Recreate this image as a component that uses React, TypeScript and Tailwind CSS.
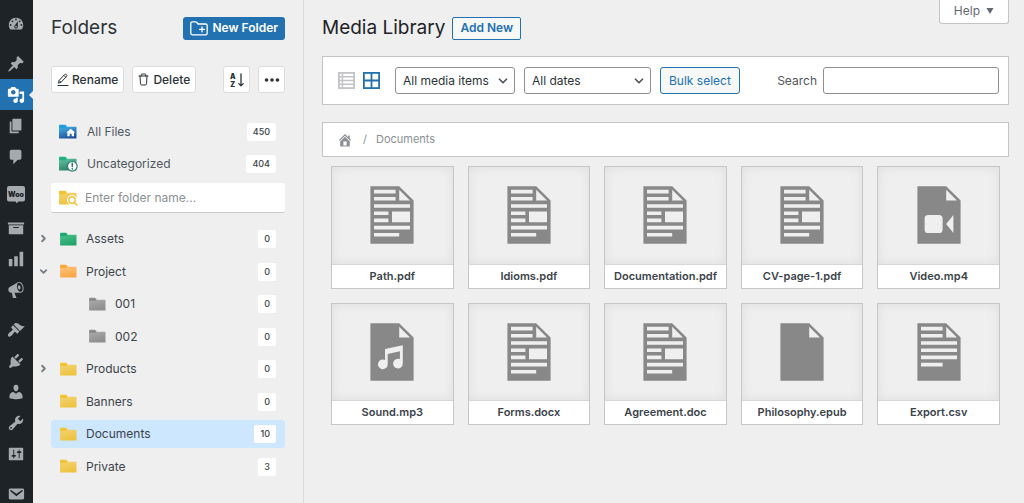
import { useId, type ReactNode } from "react";
import { ChevronDown, ChevronRight } from "lucide-react";

/* ---------- Admin menu ---------- */

const glyphs = {
  dashboard:
    "M3.76 16h12.48c1.1-1.37 1.76-3.11 1.76-5 0-4.42-3.58-8-8-8s-8 3.58-8 8c0 1.89.66 3.63 1.76 5zM10 4c.55 0 1 .45 1 1s-.45 1-1 1-1-.45-1-1 .45-1 1-1zM6 6c.55 0 1 .45 1 1s-.45 1-1 1-1-.45-1-1 .45-1 1-1zm8 0c.55 0 1 .45 1 1s-.45 1-1 1-1-.45-1-1 .45-1 1-1zm-5.37 5.55L12 7v6c0 1.1-.9 2-2 2s-2-.9-2-2c0-.57.24-1.08.63-1.45zM4 10c.55 0 1 .45 1 1s-.45 1-1 1-1-.45-1-1 .45-1 1-1zm12 0c.55 0 1 .45 1 1s-.45 1-1 1-1-.45-1-1 .45-1 1-1zm-5 3c0-.55-.45-1-1-1s-1 .45-1 1 .45 1 1 1 1-.45 1-1z",
  post: "M10.44 3.02l1.82-1.82 6.36 6.35-1.83 1.82c-1.05-.68-2.48-.57-3.41.36l-.75.75c-.92.93-1.04 2.35-.35 3.41l-1.83 1.82-2.41-2.41-2.8 2.79c-.42.42-3.38 2.71-3.8 2.29s1.86-3.39 2.28-3.81l2.79-2.79L4.1 9.36l1.83-1.82c1.05.69 2.48.57 3.4-.36l.75-.75c.93-.92 1.05-2.35.36-3.41z",
  media:
    "M13 11V4c0-.55-.45-1-1-1h-1.67L9 1H5L3.67 3H2c-.55 0-1 .45-1 1v7c0 .55.45 1 1 1h10c.55 0 1-.45 1-1zM7 4.5c1.38 0 2.5 1.12 2.5 2.5S8.38 9.5 7 9.5 4.5 8.38 4.5 7 5.62 4.5 7 4.5zM14 6h5v10.5c0 1.38-1.12 2.5-2.5 2.5S14 17.88 14 16.5s1.12-2.5 2.5-2.5c.17 0 .34.02.5.05V9h-3V6zm-4 8.05V13h2v3.5c0 1.38-1.12 2.5-2.5 2.5S7 17.88 7 16.5 8.12 14 9.5 14c.17 0 .34.02.5.05z",
  page: "M6 15V2h10v13H6zm-1 1h8v2H3V5h2v11z",
  comments:
    "M5 2h9c1.1 0 2 .9 2 2v7c0 1.1-.9 2-2 2h-2l-5 5v-5H5c-1.1 0-2-.9-2-2V4c0-1.1.9-2 2-2z",
  archive: "M19 4v2H1V4h18zM2 7h16v10H2V7zm11 3V9H7v1h6z",
  chart: "M18 18V2h-4v16h4zm-6 0V7H8v11h4zm-6 0v-8H2v8h4z",
  megaphone:
    "M18.15 5.94c.46 1.62.38 3.22-.02 4.48-.42 1.28-1.26 2.18-2.3 2.48-.16.06-.26.06-.4.06-.06.02-.12.02-.18.02-.06.02-.14.02-.22.02h-6.8l2.22 5.5c.02.14-.06.26-.14.34-.08.1-.24.16-.34.16H6.95c-.1 0-.26-.06-.34-.16-.08-.08-.16-.2-.14-.34l-1-5.5H4.25l-.02-.02c-.5.06-1.08-.18-1.54-.62s-.88-1.08-1.06-1.88c-.24-.8-.2-1.56-.02-2.2.18-.62.58-1.08 1.06-1.3l.02-.02 9-5.4c.1-.06.18-.1.24-.16.06-.04.14-.08.24-.12.16-.08.28-.12.5-.18 1.04-.3 2.24.1 3.22.98s1.84 2.24 2.26 3.86zm-2.58 5.98h-.02c.4-.1.74-.34 1.04-.7.58-.7.86-1.76.86-3.04 0-.64-.1-1.3-.28-1.98-.34-1.36-1.02-2.5-1.78-3.24s-1.68-1.1-2.46-.88c-.82.22-1.4.96-1.7 2-.32 1.04-.28 2.36.06 3.72.38 1.36 1 2.5 1.8 3.24.78.74 1.62 1.1 2.48.88zm-2.54-7.08c.22-.04.42-.02.62.04.38.16.76.48 1.02 1s.42 1.2.42 1.78c0 .3-.04.56-.12.8-.18.48-.44.84-.86.94-.34.1-.8-.06-1.14-.4s-.64-.86-.78-1.5c-.18-.62-.12-1.24.02-1.72s.48-.84.82-.94z",
  appearance:
    "M14.48 11.06L7.41 3.99l1.5-1.5c.5-.56 2.3-.47 3.51.32 1.21.8 1.43 1.28 2.91 2.1 1.18.64 2.45 1.26 4.45.85zm-.71.71L6.7 4.7 4.93 6.47c-.39.39-.39 1.02 0 1.41l1.06 1.06c.39.39.39 1.03 0 1.42-.6.6-1.43 1.11-2.21 1.69-.35.26-.7.53-1.01.84C1.43 14.23.4 16.08 1.4 17.07c.99 1 2.84-.03 4.18-1.36.31-.31.58-.66.85-1.02.57-.78 1.08-1.61 1.69-2.21.39-.39 1.02-.39 1.41 0l1.06 1.06c.39.39 1.02.39 1.41 0z",
  plugins:
    "M13.11 4.36L9.87 7.6 8 5.73l3.24-3.24c.35-.34 1.05-.2 1.56.32.52.51.66 1.21.31 1.55zm-8 1.77l.91-1.12 9.01 9.01-1.19.84c-.71.71-2.63 1.16-3.82 1.16H6.14L4.9 17.26c-.59.59-1.54.59-2.12 0-.59-.58-.59-1.53 0-2.12l1.24-1.24v-3.88c0-1.13.4-3.19 1.09-3.89zm7.26 3.97l3.24-3.24c.34-.35 1.04-.21 1.55.31.52.51.66 1.21.31 1.55l-3.24 3.25z",
  users:
    "M10 9.25c-2.27 0-2.73-3.44-2.73-3.44C7 4.02 7.82 2 9.97 2c2.16 0 2.98 2.02 2.71 3.81 0 0-.41 3.44-2.68 3.44zm0 2.57L12.72 10c2.39 0 4.52 2.33 4.52 4.53v2.49s-3.65 1.13-7.24 1.13c-3.65 0-7.24-1.13-7.24-1.13v-2.49c0-2.25 1.94-4.48 4.47-4.48z",
  tools:
    "M16.68 9.77c-1.34 1.34-3.3 1.67-4.95.99l-5.41 6.52c-.99.99-2.59.99-3.58 0s-.99-2.59 0-3.57l6.52-5.42c-.68-1.65-.35-3.61.99-4.95 1.28-1.28 3.12-1.62 4.72-1.06l-2.89 2.89 2.82 2.82 2.86-2.87c.53 1.58.18 3.39-1.08 4.65zM3.81 16.21c.4.39 1.04.39 1.43 0 .4-.4.4-1.04 0-1.43-.39-.4-1.03-.4-1.43 0-.39.39-.39 1.03 0 1.43z",
  settings:
    "M18 16V4c0-.55-.45-1-1-1H3c-.55 0-1 .45-1 1v12c0 .55.45 1 1 1h14c.55 0 1-.45 1-1zM8 11h1c.55 0 1 .45 1 1s-.45 1-1 1H8v1.5c0 .28-.22.5-.5.5s-.5-.22-.5-.5V13H6c-.55 0-1-.45-1-1s.45-1 1-1h1V5.5c0-.28.22-.5.5-.5s.5.22.5.5V11zm5-2h-1c-.55 0-1-.45-1-1s.45-1 1-1h1V5.5c0-.28.22-.5.5-.5s.5.22.5.5V7h1c.55 0 1 .45 1 1s-.45 1-1 1h-1v5.5c0 .28-.22.5-.5.5s-.5-.22-.5-.5V9z",
  email:
    "M3.87 4h13.25C18.37 4 19 4.59 19 5.79v8.42c0 1.19-.63 1.79-1.88 1.79H3.87c-1.25 0-1.88-.6-1.88-1.79V5.79c0-1.2.63-1.79 1.88-1.79zm6.62 8.6l6.74-5.53c.24-.2.43-.66.13-1.07-.29-.41-.82-.42-1.17-.17l-5.7 3.86L4.8 5.83c-.35-.25-.88-.24-1.17.17-.3.41-.11.87.13 1.07z",
  home: "M16 8.5l1.53 1.53-1.06 1.06L10 4.6l-6.47 6.49-1.06-1.06L10 2.5l4 4v-2h2v4zm-6-2.46l6 5.99V18H4v-5.97zM12 17v-5H8v5h4z",
};

function Glyph({ d, className }: { d: string; className: string }) {
  return (
    <svg viewBox="0 0 20 20" className={className} fill="currentColor" fillRule="evenodd" aria-hidden="true">
      <path d={d} />
    </svg>
  );
}

function WooGlyph() {
  return (
    <svg viewBox="0 3 18 18" className="size-[18px] overflow-visible" aria-hidden="true">
      <path d="M2 1h14a2 2 0 0 1 2 2v11.500a2 2 0 0 1-2 2h-4.500l-1.800 1.800L8.500 16.500H2a2 2 0 0 1-2-2V3a2 2 0 0 1 2-2z" fill="#a7aaad" />
      <text x="9" y="11.500" textAnchor="middle" fontFamily="Inter, sans-serif" fontSize="7" fontWeight="900" fill="#1d2327">
        Woo
      </text>
    </svg>
  );
}

const menuGroups: { name: string; d?: string }[][] = [
  [{ name: "Dashboard", d: glyphs.dashboard }],
  [
    { name: "Posts", d: glyphs.post },
    { name: "Media", d: glyphs.media },
    { name: "Pages", d: glyphs.page },
    { name: "Comments", d: glyphs.comments },
  ],
  [
    { name: "WooCommerce" },
    { name: "Products", d: glyphs.archive },
    { name: "Analytics", d: glyphs.chart },
    { name: "Marketing", d: glyphs.megaphone },
  ],
  [
    { name: "Appearance", d: glyphs.appearance },
    { name: "Plugins", d: glyphs.plugins },
    { name: "Users", d: glyphs.users },
    { name: "Tools", d: glyphs.tools },
    { name: "Settings", d: glyphs.settings },
  ],
  [{ name: "Mail", d: glyphs.email }],
];

function AdminMenu() {
  return (
    <nav aria-label="Admin menu" className="flex w-[33px] shrink-0 flex-col gap-[9px] bg-[#1d2327] pt-2 text-[#a7aaad]">
      {menuGroups.map((group, i) => (
        <div key={i} className="flex flex-col">
          {group.map(({ name, d }) => {
            const active = name === "Media";
            return (
              <a
                key={name}
                href="#"
                aria-label={name}
                aria-current={active ? "page" : undefined}
                className={
                  active
                    ? "relative flex h-[31px] items-center justify-center bg-[#2271b1] pr-[2px] text-white"
                    : "flex h-[31px] items-center justify-center pr-[2px]"
                }
              >
                {d ? <Glyph d={d} className="size-[18px]" /> : <WooGlyph />}
                {active && (
                  <span className="absolute right-0 size-0 border-y-4 border-r-4 border-y-transparent border-r-[#efefef]" />
                )}
              </a>
            );
          })}
        </div>
      ))}
    </nav>
  );
}

/* ---------- Folder panel ---------- */

const folderTones = {
  blue: ["#1f9be0", "#45aee8", "#1d4f94"],
  teal: ["#22b07d", "#5cc39c", "#2c7d6c"],
  green: ["#19a974", "#4cbd8b", "#1da468"],
  orange: ["#fda63a", "#fec27c", "#fda644"],
  yellow: ["#f2c230", "#f2d272", "#eec23c"],
  gray: ["#8b8b8b", "#a9a9a9", "#8d8d8d"],
};

type Tone = keyof typeof folderTones;

function FolderIcon({ tone, children, large }: { tone: Tone; children?: ReactNode; large?: boolean }) {
  const id = useId();
  const [tab, from, to] = folderTones[tone];
  return (
    <svg viewBox="0 0 19 16" className={large ? "h-4 w-[19px] shrink-0" : "h-[15px] w-[18px] shrink-0"} aria-hidden="true">
      <defs>
        <linearGradient id={id} x1="0.200" y1="0" x2="0.600" y2="1">
          <stop offset="0" stopColor={from} />
          <stop offset="1" stopColor={to} />
        </linearGradient>
      </defs>
      <path d="M0 1.300Q0 .8.5.8H6q.5 0 .8.400L8 2.800v3H0z" fill={tab} />
      <path d="M0 4.200h6.200L7.800 2.800H17q.5 0 .5.500V14q0 .5-.5.500H.5Q0 14.500 0 14z" fill={`url(#${id})`} />
      {children}
    </svg>
  );
}

function Count({ value }: { value: number }) {
  return (
    <span className="ml-auto rounded-[2px] bg-white px-[6px] text-[9px] font-medium leading-[18px] text-[#3c434a]">
      {value}
    </span>
  );
}

const folders: { name: string; count: number; tone: Tone; state?: "open" | "closed"; child?: boolean; selected?: boolean }[] = [
  { name: "Assets", count: 0, tone: "green", state: "closed" },
  { name: "Project", count: 0, tone: "orange", state: "open" },
  { name: "001", count: 0, tone: "gray", child: true },
  { name: "002", count: 0, tone: "gray", child: true },
  { name: "Products", count: 0, tone: "yellow", state: "closed" },
  { name: "Banners", count: 0, tone: "yellow" },
  { name: "Documents", count: 10, tone: "yellow", selected: true },
  { name: "Private", count: 3, tone: "yellow" },
];

const toolButton =
  "flex h-[27px] items-center justify-center rounded-[3px] border border-[#dcdcde] bg-white text-xs font-medium text-[#2c3338]";

function FolderPanel() {
  return (
    <aside className="w-[271px] shrink-0 border-r border-[#d9d9e0] pl-[18px] pr-[18px] pt-4">
      <div className="flex items-center justify-between">
        <h2 className="text-[19px] leading-6 text-[#2c3338]">Folders</h2>
        <button className="flex h-[23px] items-center gap-[4px] rounded-[3px] bg-[#2271b1] px-[7px] text-xs font-semibold text-white">
          <svg viewBox="0 0 18 15" className="h-[15px] w-[18px]" fill="none" stroke="currentColor" strokeWidth="1.300" strokeLinecap="round" strokeLinejoin="round" aria-hidden="true">
            <path d="M.8 12.200V2.300Q.8.8 2.300.8h3.200q.7 0 1.100.5l1.500 1.700h7.400q1.700 0 1.700 1.600v7.600q0 1.600-1.700 1.600H2.500Q.8 13.800.8 12.200z" />
            <path d="M12 6v4.800M9.600 8.400h4.800" />
          </svg>
          New Folder
        </button>
      </div>

      <div className="mt-[26px] flex gap-2">
        <button className={`${toolButton} gap-[3px] px-[5px]`}>
          <svg viewBox="0 0 12 14" className="h-[14px] w-3" fill="none" stroke="currentColor" strokeWidth="1" strokeLinejoin="round" aria-hidden="true">
            <path d="M1.500 10.200l.6-2.800 5.600-5.900q.8-.7 1.700.1.900.9.200 1.800L4 9.300zM2.100 7.400L4 9.300M6.900 2.400l1.900 1.900" />
            <path d="M1 12.500h10" strokeLinecap="round" />
          </svg>
          Rename
        </button>
        <button className={`${toolButton} gap-[4px] px-[5px]`}>
          <svg viewBox="0 0 11 13" className="h-[13px] w-[11px]" fill="none" stroke="currentColor" strokeWidth="1" strokeLinecap="round" strokeLinejoin="round" aria-hidden="true">
            <path d="M1 3h9M3.300 3V1.800q0-.8.8-.8h2.800q.8 0 .8.8V3M2 3l.5 7.800q.1 1.200 1.200 1.200h3.600q1.100 0 1.200-1.200L9 3" />
          </svg>
          Delete
        </button>
        <button aria-label="Sort folders" className={`${toolButton} ml-auto w-[27px]`}>
          <svg viewBox="0 0 16 16" className="size-4" fill="none" stroke="currentColor" strokeWidth="1.300" strokeLinecap="round" strokeLinejoin="round" aria-hidden="true">
            <text x="3.800" y="6.800" textAnchor="middle" fontFamily="Inter, sans-serif" fontSize="7" fontWeight="900" fill="currentColor" stroke="none">A</text>
            <text x="3.800" y="15" textAnchor="middle" fontFamily="Inter, sans-serif" fontSize="7" fontWeight="900" fill="currentColor" stroke="none">Z</text>
            <path d="M12 1.800v12M9.800 11.600l2.200 2.300 2.200-2.300" />
          </svg>
        </button>
        <button aria-label="More actions" className={`${toolButton} w-[27px]`}>
          <svg viewBox="0 0 16 4" className="h-1 w-4" fill="currentColor" aria-hidden="true">
            <circle cx="2.500" cy="2" r="1.800" />
            <circle cx="8" cy="2" r="1.800" />
            <circle cx="13.500" cy="2" r="1.800" />
          </svg>
        </button>
      </div>

      <div className="mt-[25px] flex flex-col gap-[4px] text-xs text-[#50575e]">
        <a href="#" className="flex h-7 items-center gap-[9px] pl-2 pr-[9px]">
          <FolderIcon tone="blue" large>
            <path d="M7.300 8.500l4.400-3.800 4.400 3.800h-1.100v3.700h-2.300V9.700h-2v2.500H8.400V8.500z" fill="#fff" />
          </FolderIcon>
          All Files
          <Count value={450} />
        </a>
        <a href="#" className="flex h-7 items-center gap-[9px] pl-2 pr-[9px]">
          <FolderIcon tone="teal" large>
            <circle cx="13.300" cy="10.300" r="4.800" fill="#fff" stroke="#2c7d6c" strokeWidth="1.200" />
            <path d="M13.300 7.400v3.200" stroke="#2c7d6c" strokeWidth="1.600" strokeLinecap="round" />
            <circle cx="13.300" cy="12.800" r=".9" fill="#2c7d6c" />
          </FolderIcon>
          Uncategorized
          <Count value={404} />
        </a>
      </div>

      <div className="mt-[5px] flex h-[30px] items-center gap-[7px] rounded-[3px] border-b border-[#c9c9cb] bg-white pl-2 pr-[9px]">
        <FolderIcon tone="yellow" large>
          <circle cx="13" cy="10" r="3.300" fill="#f5dc95" stroke="#fff" strokeWidth="3.400" />
          <path d="M15.300 12.400l2.500 2.600" stroke="#fff" strokeWidth="3" />
          <circle cx="13" cy="10" r="3.200" fill="#fff" stroke="#eec23c" strokeWidth="1.400" />
          <path d="M15.300 12.400l2.600 2.700" stroke="#eec23c" strokeWidth="1.500" strokeLinecap="round" />
        </FolderIcon>
        <input
          type="text"
          aria-label="Folder name"
          placeholder="Enter folder name..."
          className="min-w-0 flex-1 bg-transparent text-xs text-[#3c434a] outline-none placeholder:text-[#8c8f94]"
        />
      </div>

      <ul className="mt-3 flex min-h-[256px] flex-col justify-between text-xs text-[#3c434a]">
        {folders.map((f) => (
          <li key={f.name} className="relative">
            {f.state && (
              <button aria-label={`Toggle ${f.name}`} className="absolute -left-[13px] top-2 text-[#787c82]">
                {f.state === "open" ? (
                  <ChevronDown className="size-[11px]" strokeWidth={4} />
                ) : (
                  <ChevronRight className="size-[11px]" strokeWidth={4} />
                )}
              </button>
            )}
            <a
              href="#"
              className={
                f.selected
                  ? "flex h-7 items-center gap-2 rounded-[3px] bg-[#cce7ff] pl-[9px] pr-[9px]"
                  : f.child
                    ? "flex h-7 items-center gap-2 pl-[38px] pr-[9px]"
                    : "flex h-7 items-center gap-2 pl-[9px] pr-[9px]"
              }
            >
              <FolderIcon tone={f.tone} />
              {f.name}
              <Count value={f.count} />
            </a>
          </li>
        ))}
      </ul>
    </aside>
  );
}

/* ---------- Media library ---------- */

type FileKind = "document" | "text" | "audio" | "video" | "default";

const fileCutouts: Record<FileKind, string> = {
  document: "M5 3h6v1H5zM5 5h6v1H5zM5 7h10v1H5zM5 9h4v1H5zM5 11h4v1H5zM10 9h5v3h-5zM5 13h10v1H5zM5 15h7v1H5z",
  text: "M5 3h6v1H5zM5 5h6v1H5zM5 7h10v1H5zM5 9h10v1H5zM5 11h10v1H5zM5 13h6v1H5z",
  audio:
    "M8.070 9.200L13 8.100v5.100a1.350 1.350 0 1 1-.8-1.230V9.800l-3.400.750v2.900a1.350 1.350 0 1 1-.730-1.220z",
  video: "M7 10h3q1 0 1 1v3q0 1-1 1H7q-1 0-1-1v-3q0-1 1-1zM12 12.500l2-2.500v5z",
  default: "",
};

const files: { name: string; kind: FileKind }[] = [
  { name: "Path.pdf", kind: "document" },
  { name: "Idioms.pdf", kind: "document" },
  { name: "Documentation.pdf", kind: "document" },
  { name: "CV-page-1.pdf", kind: "document" },
  { name: "Video.mp4", kind: "video" },
  { name: "Sound.mp3", kind: "audio" },
  { name: "Forms.docx", kind: "document" },
  { name: "Agreement.doc", kind: "document" },
  { name: "Philosophy.epub", kind: "default" },
  { name: "Export.csv", kind: "text" },
];

function FileTile({ name, kind }: { name: string; kind: FileKind }) {
  return (
    <li className="flex aspect-square flex-col border border-[#c5c6c8] bg-[#efefef]">
      <div className="flex flex-1 items-center justify-center shadow-[inset_0_0_12px_rgba(0,0,0,0.07)]">
        <svg viewBox="0 0 20 20" className="size-[72px] text-[#888]" fill="currentColor" fillRule="evenodd" aria-hidden="true">
          <path d={`M12 2l4 4v12H4V2zM12 6h3l-3-3z${fileCutouts[kind]}`} />
        </svg>
      </div>
      <div className="truncate border-t border-[#d5d6d8] bg-white text-center text-[11px] font-semibold leading-[23px] text-[#3c434a]">
        {name}
      </div>
    </li>
  );
}

function FilterSelect({ label, options, className }: { label: string; options: string[]; className: string }) {
  return (
    <div className={`relative ${className}`}>
      <select
        aria-label={label}
        className="h-[27px] w-full appearance-none rounded-[3px] border border-[#8c8f94] bg-white pl-[7px] pr-5 text-xs text-[#2c3338]"
      >
        {options.map((o) => (
          <option key={o}>{o}</option>
        ))}
      </select>
      <ChevronDown className="pointer-events-none absolute right-[5px] top-[7px] size-[14px] text-[#50575e]" strokeWidth={3} />
    </div>
  );
}

function MediaLibrary() {
  return (
    <main className="min-w-0 flex-1 pb-6 pl-[18px] pr-[15px]">
      <div className="flex items-start justify-between">
        <div className="flex items-center gap-[7px] pt-4">
          <h1 className="text-[19px] leading-6 text-[#1d2327]">Media Library</h1>
          <button className="h-[23px] rounded-[2px] border border-[#2271b1] bg-[#f6f7f7] px-[7px] text-xs font-semibold text-[#2271b1]">
            Add New
          </button>
        </div>
        <button className="flex h-6 items-center gap-[6px] rounded-b-[3px] border border-t-0 border-[#c3c4c7] bg-white px-[14px] pb-[2px] text-xs text-[#646970]">
          Help
          <svg viewBox="0 0 8 6" className="h-[6px] w-2" fill="currentColor" aria-hidden="true">
            <path d="M.5 0h7L4 6z" />
          </svg>
        </button>
      </div>

      <div className="mt-4 flex h-[49px] items-center border border-[#c3c4c7] bg-white pl-[15px] pr-[9px]">
        <button aria-label="List view" className="text-[#c3c4c7]">
          <svg viewBox="0 0 17 17" className="size-[17px]" fill="none" stroke="currentColor" aria-hidden="true">
            <rect x=".9" y=".9" width="15.200" height="15.200" strokeWidth="1.800" />
            <path d="M4.500 1v15M1 4.700h15M1 8.500h15M1 12.300h15" strokeWidth="1.400" />
          </svg>
        </button>
        <button aria-label="Grid view" className="ml-2 text-[#2271b1]">
          <svg viewBox="0 0 17 17" className="size-[17px]" fill="none" stroke="currentColor" strokeWidth="1.800" aria-hidden="true">
            <rect x=".9" y=".9" width="15.200" height="15.200" />
            <path d="M8.500 1v15M1 8.500h15" />
          </svg>
        </button>
        <FilterSelect label="Filter by type" options={["All media items"]} className="ml-[15px] w-[120px]" />
        <FilterSelect label="Filter by date" options={["All dates"]} className="ml-[9px] w-[127px]" />
        <button className="ml-[9px] h-[27px] rounded-[3px] border border-[#2271b1] bg-[#f6f7f7] px-2 text-xs text-[#2271b1]">
          Bulk select
        </button>
        <label htmlFor="media-search" className="ml-auto text-xs text-[#50575e]">
          Search
        </label>
        <input
          id="media-search"
          type="search"
          className="ml-[6px] h-[27px] w-[176px] rounded-[3px] border border-[#8c8f94] bg-white px-2 text-xs"
        />
      </div>

      <nav
        aria-label="Breadcrumb"
        className="mt-[17px] flex h-[35px] items-center border border-[#c3c4c7] bg-white pl-[14px] text-[11px] text-[#8c8f94]"
      >
        <a href="#" aria-label="Home" className="text-[#8c8f94]">
          <Glyph d={glyphs.home} className="size-4" />
        </a>
        <span className="ml-[10px]">/</span>
        <a href="#" className="ml-[9px]">
          Documents
        </a>
      </nav>

      <ul className="mt-[9px] grid grid-cols-5 gap-[14px] px-[9px]">
        {files.map((f) => (
          <FileTile key={f.name} {...f} />
        ))}
      </ul>
    </main>
  );
}

export default function App() {
  return (
    <div className="flex min-h-screen bg-[#efefef] font-[Inter,'Noto_Sans',sans-serif]">
      <AdminMenu />
      <FolderPanel />
      <MediaLibrary />
    </div>
  );
}
